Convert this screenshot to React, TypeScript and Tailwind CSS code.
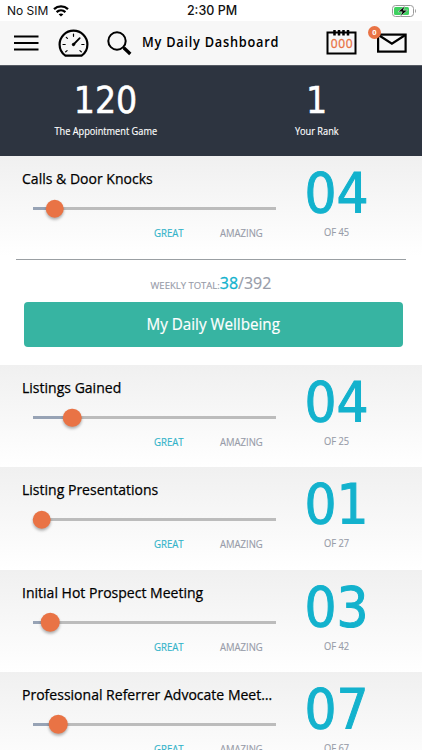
type Goal = {
  title: string;
  count: string;
  total: number;
  progress: number;
};

const goals: Goal[] = [
  { title: "Calls & Door Knocks", count: "04", total: 45, progress: 21.5 },
  { title: "Listings Gained", count: "04", total: 25, progress: 39 },
  { title: "Listing Presentations", count: "01", total: 27, progress: 8.5 },
  { title: "Initial Hot Prospect Meeting", count: "03", total: 42, progress: 17 },
  { title: "Professional Referrer Advocate Meet…", count: "07", total: 67, progress: 25 },
];

const StatusBar = () => (
  <div className="flex h-[21px] shrink-0 items-center bg-white font-['Inter',sans-serif] text-[#111]">
    <div className="flex flex-1 items-center pl-[7px] text-[12px]">
      No SIM
      <svg className="ml-[5px]" width="16" height="12" viewBox="0 0 16 12" fill="none" stroke="#000" strokeWidth="2.3">
        <path d="M1 4.2C5 .5 11 .5 15 4.2" />
        <path d="M3.6 7.1c2.5-2.3 6.3-2.3 8.8 0" />
        <path d="M8 11.6 5.6 9.3c1.4-1.2 3.4-1.2 4.8 0Z" fill="#000" stroke="none" />
      </svg>
    </div>
    <div className="pt-[2px] text-[12.5px] font-medium">2:30 PM</div>
    <div className="flex flex-1 justify-end pr-[5px]">
      <svg width="25" height="12" viewBox="0 0 25 12">
        <rect x=".5" y=".5" width="21" height="11" rx="3" fill="#fff" stroke="#9a9a9a" />
        <rect x="2" y="2" width="15" height="8" rx="1.5" fill="#3fd160" />
        <path d="M23 4v4c1.3-.6 1.3-3.4 0-4Z" fill="#9a9a9a" />
        <path d="m13 .8-7 6h4.2l-2 4.6 7.3-6.2h-4.2Z" fill="#000" stroke="#fff" strokeWidth=".5" />
      </svg>
    </div>
  </div>
);

const Gauge = () => (
  <svg width="31" height="29" viewBox="0 0 31 29" fill="none" stroke="#000" strokeLinecap="round">
    <path
      d="M7.4 26.7C3.8 24.2 1.6 20.1 1.6 15.5a13.9 13.9 0 0 1 27.8 0c0 4.6-2.2 8.7-5.8 11.2Z"
      strokeWidth="2.2"
      strokeLinejoin="round"
    />
    <path
      d="M15.5 5v2.3M8.3 8.3l1.1 1.1M5 15.5h2.2M23.8 15.5h2.2M7.7 22.8l1.4-1.2M23.3 22.8l-1.4-1.2"
      strokeWidth="1.2"
    />
    <path d="m15.5 15.5 6.2-6.4" strokeWidth="1.8" />
    <circle cx="15.5" cy="15.5" r="1.2" fill="#000" />
  </svg>
);

const Header = () => (
  <header className="flex h-[45px] shrink-0 items-center border-b border-[#555a63] bg-[#f7f7f7]">
    <svg className="ml-[14px] shrink-0" width="25" height="16" viewBox="0 0 25 16" stroke="#000" strokeWidth="1.8">
      <path d="M0 1.5h24.5M0 8h24.5M0 14.5h24.5" />
    </svg>
    <div className="ml-[19px] shrink-0">
      <Gauge />
    </div>
    <svg className="ml-[18px] shrink-0" width="25" height="25" viewBox="0 0 25 25" fill="none" stroke="#000">
      <circle cx="10" cy="10" r="8.7" strokeWidth="2" />
      <path d="m16 16 2 2" strokeWidth="2" />
      <path d="m17 17 6.3 6" strokeWidth="3.3" />
    </svg>
    <h1 className="ml-[10px] w-[140px] origin-left scale-x-[0.945] whitespace-nowrap pb-px text-[13.5px] font-semibold tracking-[0.8px]">
      My Daily Dashboard
    </h1>
    <svg className="mb-[2px] ml-[44px] shrink-0" width="31" height="25" viewBox="0 0 31 25" fill="none" stroke="#000">
      <rect x="1.5" y="2.5" width="28" height="21" strokeWidth="2" />
      <path d="M8.5 0v5.500M13 0v5.500M17.500 0v5.500M22 0v5.500" strokeWidth="2.500" />
      <text x="15.7" y="17.5" textAnchor="middle" textLength="22" fill="#e97345" stroke="#e97345" strokeWidth=".3" className="text-[12px]">
        000
      </text>
    </svg>
    <div className="relative ml-[20px]">
      <svg width="30" height="20" viewBox="0 0 30 20" fill="none" stroke="#000" strokeWidth="2.2">
        <rect x="1.1" y="1.6" width="27.5" height="17" />
        <path d="m1.5 2 13.4 8.6L28.300 2" />
      </svg>
      <span className="absolute -left-[9px] -top-[7px] flex size-[13px] items-center justify-center rounded-full bg-[#e97345] text-[7.5px] font-bold text-white">
        0
      </span>
    </div>
  </header>
);

const Stat = ({ value, label }: { value: string; label: string }) => (
  <div className="flex w-1/2 flex-col items-center text-white">
    <div className="mt-[14px] font-['DejaVu_Sans_Condensed','DejaVu_Sans',sans-serif] text-[37px] leading-[42px] [-webkit-text-stroke:0.5px]">
      {value}
    </div>
    <div className="mt-px scale-x-[0.92] text-[10px] leading-[16px] [-webkit-text-stroke:0.15px]">{label}</div>
  </div>
);

const GoalRow = ({ title, count, total, progress }: Goal) => (
  <div className="flex h-[102.25px] shrink-0">
    <div className="w-[276px]">
      <div className="ml-[22px] mt-[12px] w-[252px] origin-left scale-x-[0.935] whitespace-nowrap text-[15px] leading-[20px] text-black [-webkit-text-stroke:0.25px]">
        {title}
      </div>
      <div className="relative ml-[33px] mt-[19px] h-[3px] bg-[#bcbcbc]">
        <div className="h-full bg-[#97a3b5]" style={{ width: progress }} />
        <div
          className="absolute top-1/2 size-[18.5px] -translate-x-1/2 -translate-y-1/2 rounded-full bg-[#e97345] shadow-[0_2px_3px_rgba(0,0,0,0.3)]"
          style={{ left: progress }}
        />
      </div>
      <div className="mt-[15px] flex text-[10px] leading-[16px]">
        <span className="ml-[154px] w-[66px] origin-left scale-x-[0.96] text-[#31b3c9] [-webkit-text-stroke:0.15px]">
          GREAT
        </span>
        <span className="origin-left scale-x-[0.95] text-[#989ca9] [-webkit-text-stroke:0.15px]">AMAZING</span>
      </div>
    </div>
    <div className="flex w-[121px] flex-col items-center">
      <div className="mt-[8px] h-[57px] font-['DejaVu_Sans_Condensed','DejaVu_Sans',sans-serif] text-[56px] leading-[57px] text-[#13b2cd] [-webkit-text-stroke:1px]">
        {count}
      </div>
      <div className="mt-[3px] scale-x-[0.93] text-[10px] leading-[16px] text-[#989ca9] [-webkit-text-stroke:0.15px]">
        OF {total}
      </div>
    </div>
  </div>
);

const WeeklySummary = () => (
  <>
    <div className="mx-[16px] mt-[0.75px] h-px shrink-0 bg-[#9a9fa3]" />
    <div className="mt-[12px] flex h-[22px] items-baseline justify-center text-[#989ca9]">
      <span className="text-[9.5px] [-webkit-text-stroke:0.15px]">WEEKLY TOTAL:</span>
      <span className="text-[16px] leading-[22px] text-[#13b2cd] [-webkit-text-stroke:0.3px]">38</span>
      <span className="text-[16px] leading-[22px] [-webkit-text-stroke:0.15px]">/392</span>
    </div>
    <button className="ml-[23.5px] mt-[7.5px] h-[45px] w-[379px] rounded-[4px] bg-[#37b4a2] text-white">
      <span className="inline-block scale-x-[0.95] text-[16px] [-webkit-text-stroke:0.2px]">My Daily Wellbeing</span>
    </button>
  </>
);

export default function App() {
  const [first, ...rest] = goals;

  return (
    <div className="flex h-[750px] w-[422px] flex-col overflow-hidden bg-white font-['Open_Sans','Noto_Sans',sans-serif]">
      <StatusBar />
      <Header />
      <section className="flex h-[90px] shrink-0 bg-[#2d3440]">
        <Stat value="120" label="The Appointment Game" />
        <Stat value="1" label="Your Rank" />
      </section>

      <section className="h-[209px] shrink-0 bg-linear-to-b from-[#f0f0f0] to-white to-[100px]">
        <GoalRow {...first} />
        <WeeklySummary />
      </section>

      {rest.map((goal) => (
        <section key={goal.title} className="shrink-0 bg-linear-to-b from-[#f0f0f0] to-white">
          <GoalRow {...goal} />
        </section>
      ))}
    </div>
  );
}
